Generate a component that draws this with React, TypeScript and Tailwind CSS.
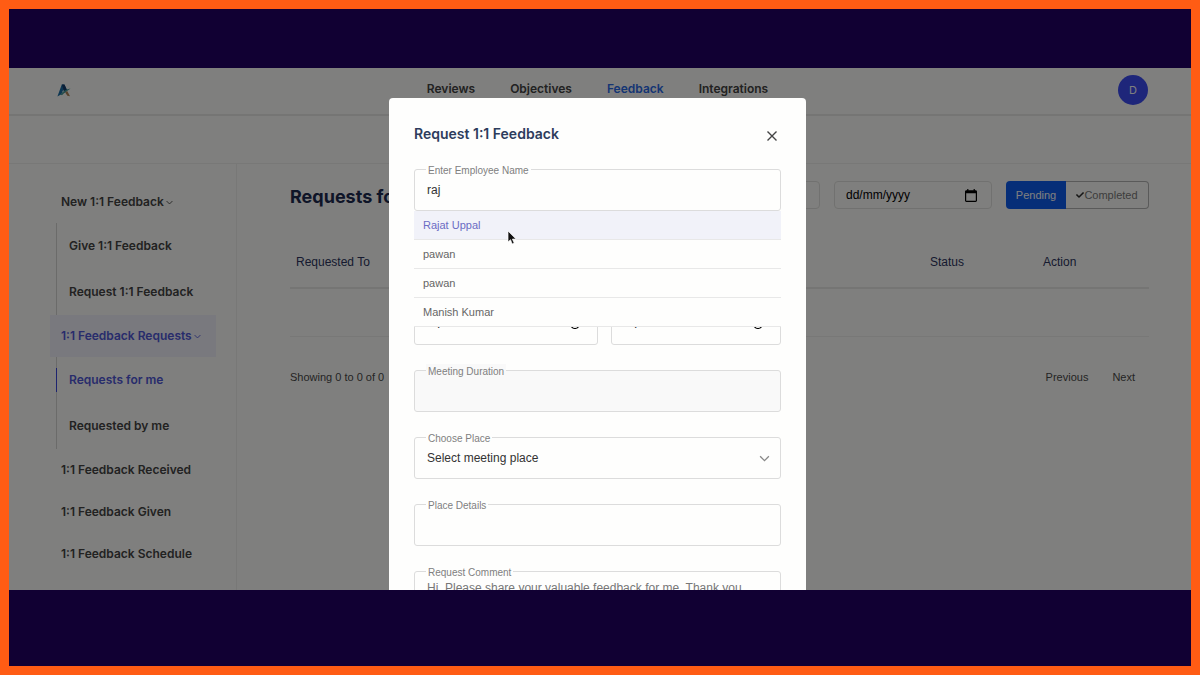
import React, { useState } from 'react';
import { FaCheck } from 'react-icons/fa';

const NAV_LINKS = ['Reviews', 'Objectives', 'Feedback', 'Integrations'];
const EMPLOYEES = ['Rajat Uppal', 'pawan', 'pawan', 'Manish Kumar'];

const SIDEBAR = [
  { label: 'New 1:1 Feedback', children: ['Give 1:1 Feedback', 'Request 1:1 Feedback'] },
  { label: '1:1 Feedback Requests', children: ['Requests for me', 'Requested by me'] },
  { label: '1:1 Feedback Received', children: [] },
  { label: '1:1 Feedback Given', children: [] },
  { label: '1:1 Feedback Schedule', children: [] },
];

const Logo = () => (
  <svg viewBox="0 0 14 13" className="h-[13px] w-[14px]" aria-hidden="true">
    <path d="M4.8 0.6h2.6l2.8 6-2.6 2.2-1.4-3-1.8 4.4L0.4 12.4z" fill="#1a6ea6" />
    <path d="M4.8 0.6h2.6l2.8 6-2.6 2.2z" fill="#163c6c" />
    <path d="M3.4 10.6C6 7 9 5.4 13.6 4.6 11 6.6 7.6 8.4 5 11.2z" fill="#4a9c9c" />
    <path d="M8.2 8.4l2-1.4 2.8 5.2-2.6-.4z" fill="#b08458" />
  </svg>
);

const ChevronIcon = ({ className }: { className: string }) => (
  <svg viewBox="0 0 12 8" className={className} fill="none" stroke="currentColor" strokeWidth="1.5" aria-hidden="true">
    <path d="M1 1.5l5 5 5-5" />
  </svg>
);

const CalendarIcon = () => (
  <svg viewBox="0 0 12 13" className="h-[13px] w-3" aria-hidden="true">
    <path
      d="M10.6 1.2H9.8V0H8.6v1.2H3.4V0H2.2v1.2H1.4C.6 1.2 0 1.8 0 2.5v9.1c0 .8.6 1.4 1.4 1.4h9.2c.8 0 1.4-.6 1.4-1.4V2.5c0-.7-.6-1.3-1.4-1.3zm.2 10.6H1.2V4.3h9.6z"
      fill="#000"
    />
  </svg>
);

const DateInput = ({ label }: { label: string }) => (
  <div className="flex h-7 w-[158px] items-center rounded-sm border border-[#e2e2e0] pr-3.5 pl-[11px]">
    <input aria-label={label} placeholder="dd/mm/yyyy" className="w-full min-w-0 text-xs text-black outline-none placeholder:text-black" />
    <button aria-label="Open calendar">
      <CalendarIcon />
    </button>
  </div>
);

interface FieldProps {
  id: string;
  label: string;
  children: React.ReactNode;
}

const Field: React.FC<FieldProps> = ({ id, label, children }) => (
  <div className="relative">
    <label htmlFor={id} className="absolute -top-1.5 left-3 bg-[#fefefd] px-0.5 text-[10px] leading-4 text-[#808080]">
      {label}
    </label>
    {children}
  </div>
);

const Header = () => (
  <header className="grid h-12 grid-cols-[1fr_auto_1fr] items-center border-b-2 border-[#ebebe9] pr-[43px] pb-0.5 pl-12">
    <a href="#home" aria-label="Home" className="justify-self-start">
      <Logo />
    </a>
    <nav className="mr-2.5 flex gap-[35px] pb-0.5 text-xs font-semibold text-[#444]">
      {NAV_LINKS.map(link => (
        <a key={link} href={`#${link}`} className={link === 'Feedback' ? 'text-[#2a6ae8]' : ''}>
          {link}
        </a>
      ))}
    </nav>
    <button className="h-[30px] w-[30px] justify-self-end rounded-full bg-[#3c4cf4] text-[11px] text-white">D</button>
  </header>
);

const Sidebar = () => (
  <aside className="w-[228px] shrink-0 border-r border-[#f0f0ee] pt-[17px] pr-5 pl-[41px]">
    <nav className="text-xs font-semibold text-[#444]">
      {SIDEBAR.map(group => {
        const active = group.label === '1:1 Feedback Requests';
        return (
          <div key={group.label}>
            <a
              href={`#${group.label}`}
              className={`flex h-[42px] items-center gap-0.5 pl-[11px] whitespace-nowrap ${active ? 'bg-[#f2f2fc] text-[#5058d8]' : ''}`}
            >
              {group.label}
              {group.children.length > 0 && <ChevronIcon className="h-[5px] w-[7px]" />}
            </a>
            {group.children.length > 0 && (
              <ul className="ml-1.5 border-l border-[#d6d6d4]">
                {group.children.map(child => (
                  <li key={child} className="flex h-[46px] items-center">
                    <a
                      href={`#${child}`}
                      className={`-ml-px border-l py-1 pl-3 leading-4 ${
                        child === 'Requests for me' ? 'border-[#3c48e0] text-[#5058d8]' : 'border-transparent'
                      }`}
                    >
                      {child}
                    </a>
                  </li>
                ))}
              </ul>
            )}
          </div>
        );
      })}
    </nav>
  </aside>
);

const RequestsPage = () => (
  <main className="min-w-0 flex-1 pt-[17px] pr-[42px] pl-[53px] font-['Liberation_Sans',Arial,sans-serif]">
    <div className="flex items-center gap-3.5">
      <h1 className="flex-1 pt-1 font-[Inter,sans-serif] text-lg leading-6 font-bold whitespace-nowrap text-[#1c2a50]">Requests for me</h1>
      <DateInput label="Start date" />
      <DateInput label="End date" />
      <div className="flex h-7 text-[11px]">
        <button className="w-[60px] rounded-l-sm bg-[#0d5cf0] text-white">Pending</button>
        <button className="flex w-[83px] items-center justify-center rounded-r-sm border border-l-0 border-[#b4b4b4] text-[#7a7a7a]">
          <FaCheck className="h-2 w-2 text-[#2c2c2c]" />
          Completed
        </button>
      </div>
    </div>
    <table className="mt-7 w-full table-fixed text-left text-xs text-[#2c3560]">
      <thead>
        <tr className="h-[51px] border-b-2 border-[#ebebe9]">
          <th className="px-1.5 font-medium">Requested To</th>
          <th className="w-[113px] px-1.5 font-medium">Status</th>
          <th className="w-28 px-1.5 font-medium">Action</th>
        </tr>
      </thead>
      <tbody>
        <tr className="h-12 border-b border-[#f0f0ee]">
          <td colSpan={3} />
        </tr>
      </tbody>
    </table>
    <div className="flex items-center justify-between pt-8 pr-3.5 text-[11px] leading-4 text-[#4a4a4a]">
      <p>Showing 0 to 0 of 0</p>
      <div className="flex gap-6">
        <button>Previous</button>
        <button>Next</button>
      </div>
    </div>
  </main>
);

const RequestModal = () => {
  const [employee, setEmployee] = useState('raj');
  const inputClass = 'block h-[42px] w-full rounded-[3px] border border-[#dcdcdc] bg-[#fefefd] px-3 text-xs text-[#333] outline-none';

  return (
    <div
      role="dialog"
      aria-labelledby="modal-title"
      className="w-[417px] self-start rounded-sm bg-[#fefefd] px-[25px] pt-[26px] pb-8 font-['Liberation_Sans',Arial,sans-serif]"
    >
      <div className="flex items-center justify-between pb-[21px]">
        <h2 id="modal-title" className="pb-1 font-[Inter,sans-serif] text-sm leading-5 font-semibold text-[#2d3c5c]">
          Request 1:1 Feedback
        </h2>
        <button aria-label="Close" className="p-1 text-[#444]">
          <svg viewBox="0 0 10 10" className="h-2.5 w-2.5" stroke="currentColor" strokeWidth="1.4" aria-hidden="true">
            <path d="M0.5 0.5l9 9M9.5 0.5l-9 9" />
          </svg>
        </button>
      </div>
      <form className="flex flex-col gap-[25px]">
        <Field id="employee" label="Enter Employee Name">
          <input id="employee" value={employee} onChange={e => setEmployee(e.target.value)} className={inputClass} />
          <ul className="absolute top-full right-0 left-0 z-10 bg-[#fefefd] text-[11px] text-[#666]">
            {EMPLOYEES.map((name, i) => (
              <li key={i} className={`h-[29px] border-b border-[#e8e8e8] ${i === 0 ? 'bg-[#f1f2f9] text-[#6c6cc4]' : ''}`}>
                <button type="button" className="h-full w-full px-[9px] text-left">
                  {name}
                </button>
              </li>
            ))}
          </ul>
          {/* mouse pointer over the first suggestion */}
          <svg viewBox="0 0 10 15" className="absolute top-[61px] left-[93px] z-20 h-[15px] w-2.5" aria-hidden="true">
            <path d="M1 1v11l2.5-2.3L5.2 14l2-.9-1.8-4H9z" fill="#111" stroke="#fff" strokeWidth="0.7" />
          </svg>
        </Field>
        <input aria-label="Meeting date" type="date" className={inputClass} />
        <div className="grid grid-cols-[184fr_170fr] gap-[13px]">
          <input aria-label="Start time" type="time" className={inputClass} />
          <input aria-label="End time" type="time" className={inputClass} />
        </div>
        <div className="relative">
          <label htmlFor="duration" className="absolute -top-1.5 left-3 bg-[#f9f9f9] px-0.5 text-[10px] leading-4 text-[#808080]">
            Meeting Duration
          </label>
          <input id="duration" disabled className="block h-[42px] w-full rounded-[3px] border border-[#dcdcdc] bg-[#f9f9f9] px-3" />
        </div>
        <Field id="place" label="Choose Place">
          <select id="place" className={`${inputClass} appearance-none`}>
            <option>Select meeting place</option>
          </select>
          <ChevronIcon className="pointer-events-none absolute top-[18px] right-[11px] h-[7px] w-[11px] text-[#888]" />
        </Field>
        <Field id="details" label="Place Details">
          <input id="details" className={inputClass} />
        </Field>
        <Field id="comment" label="Request Comment">
          <textarea
            id="comment"
            defaultValue="Hi, Please share your valuable feedback for me. Thank you."
            className="block h-20 w-full resize-none rounded-[3px] border border-[#dcdcdc] bg-[#fefefd] px-3 pt-2 text-xs leading-4 text-[#777] outline-none"
          />
        </Field>
      </form>
    </div>
  );
};

const App: React.FC = () => (
  <div className="flex h-screen flex-col border-[9px] border-[#ff5c14] bg-[#110033] pt-[59px] pb-[76px] font-[Inter,sans-serif]">
    <div className="relative flex-1 overflow-hidden bg-[#fffffc]">
      <Header />
      <div className="h-12 border-b border-[#f0f0ee]" />
      <div className="flex h-full">
        <Sidebar />
        <RequestsPage />
      </div>
      <div className="absolute inset-0 flex justify-center overflow-hidden bg-black/50 pt-[30px] pr-[5px]">
        <RequestModal />
      </div>
    </div>
  </div>
);

export default App;
